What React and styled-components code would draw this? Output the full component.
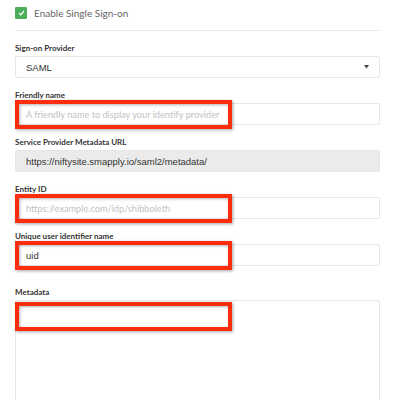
import React from 'react';
import styled, { createGlobalStyle } from 'styled-components';

const Global = createGlobalStyle`
  html, body { margin: 0; padding: 0; background: #fff; }
  body { font-family: Lato, "Open Sans", sans-serif; }
`;

const Page = styled.div`
  width: 380px;
  height: 400px;
  overflow: hidden;
  box-sizing: border-box;
  padding: 6px 0 0 15px;
`;

const CheckRow = styled.label`
  display: flex;
  align-items: center;
  gap: 7px;
  height: 14px;
  font-size: 10px;
  color: #666;
`;

const Box = styled.span`
  width: 12px;
  height: 12px;
  border-radius: 1px;
  background: #4cae5a;
  display: flex;
  align-items: center;
  justify-content: center;
`;

const Divider = styled.hr`
  margin: 10px 0 0;
  border: 0;
  border-top: 1px solid #e8e8e8;
`;

const Field = styled.div`
  margin-top: ${p => p.$gap || 12}px;
`;

const Label = styled.div`
  font-size: 8px;
  font-weight: 700;
  color: #333;
  height: 10px;
  line-height: 10px;
  margin-bottom: 3px;
`;

const Wrap = styled.div`
  position: relative;
`;

const Input = styled.div`
  box-sizing: border-box;
  height: 22px;
  border: 1px solid #e6e6e6;
  background: ${p => (p.$disabled ? '#ebebeb' : '#fff')};
  border-radius: 2px;
  display: flex;
  align-items: center;
  justify-content: space-between;
  padding: 0 10px;
  font-family: ${p => (p.$placeholder ? 'Lato, sans-serif' : '"Liberation Sans", Arial, sans-serif')};
  font-size: ${p => (p.$placeholder ? '9.2px' : '9.5px')};
  color: ${p => (p.$placeholder ? '#c2c2c2' : '#333')};
`;

const TextArea = styled.div`
  box-sizing: border-box;
  height: 120px;
  border: 1px solid #e6e6e6;
  border-radius: 2px;
`;

const Highlight = styled.div`
  position: absolute;
  left: 0;
  top: ${p => p.$top}px;
  width: 217px;
  height: 29px;
  box-sizing: border-box;
  border: 4px solid #fb2d0c;
  box-shadow: 1px 1px 3px rgba(0, 0, 0, 0.35), inset 1px 1px 3px rgba(0, 0, 0, 0.3);
  pointer-events: none;
`;

const Caret = () => (
  <svg width="5" height="4" viewBox="0 0 5 4">
    <path d="M0 0h5L2.5 3.5z" fill="#444" />
  </svg>
);

export default function App() {
  return (
    <Page>
      <Global />
      <CheckRow>
        <Box>
          <svg width="7" height="6" viewBox="0 0 7 6">
            <path d="M1 3l1.8 1.8L6 1" stroke="#fff" strokeWidth="1.2" fill="none" />
          </svg>
        </Box>
        Enable Single Sign-on
      </CheckRow>
      <Divider />
      <Field>
        <Label>Sign-on Provider</Label>
        <Input>
          SAML
          <Caret />
        </Input>
      </Field>
      <Field>
        <Label>Friendly name</Label>
        <Wrap>
          <Input $placeholder>A friendly name to display your identify provider</Input>
          <Highlight $top={-3} />
        </Wrap>
      </Field>
      <Field>
        <Label>Service Provider Metadata URL</Label>
        <Input $disabled>https://niftysite.smapply.io/saml2/metadata/</Input>
      </Field>
      <Field>
        <Label>Entity ID</Label>
        <Wrap>
          <Input $placeholder>https://example.com/idp/shibboleth</Input>
          <Highlight $top={-3} />
        </Wrap>
      </Field>
      <Field>
        <Label>Unique user identifier name</Label>
        <Wrap>
          <Input>uid</Input>
          <Highlight $top={-3} />
        </Wrap>
      </Field>
      <Field $gap={21}>
        <Label>Metadata</Label>
        <Wrap>
          <TextArea />
          <Highlight $top={2} />
        </Wrap>
      </Field>
    </Page>
  );
}
